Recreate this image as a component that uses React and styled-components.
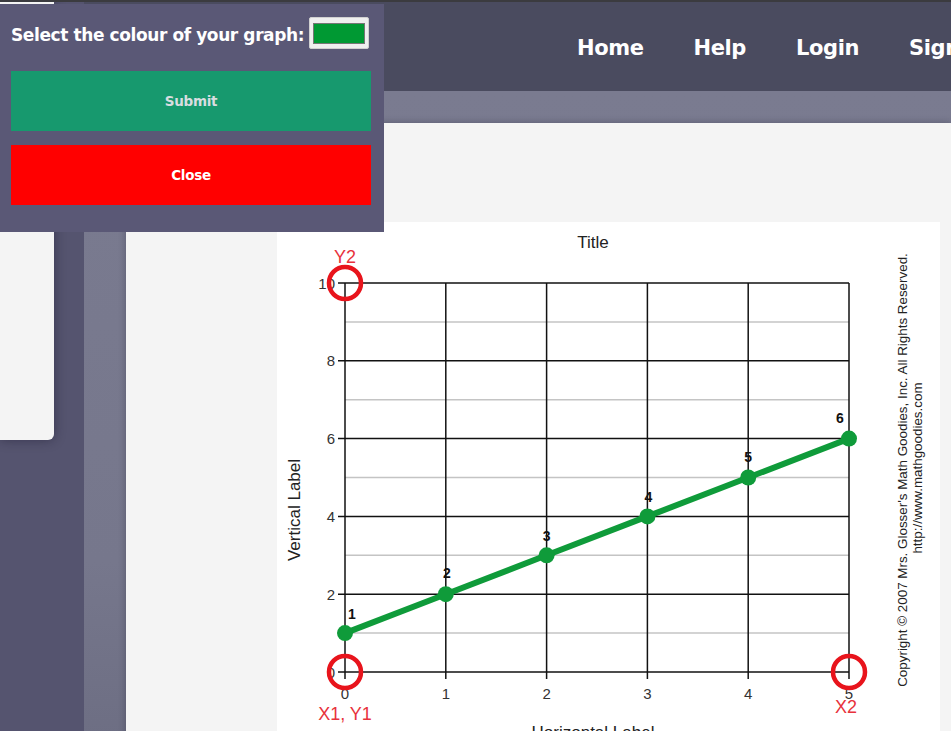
import React from 'react';
import styled, { createGlobalStyle } from 'styled-components';

const GlobalStyle = createGlobalStyle`
  html, body {
    margin: 0;
    padding: 0;
    overflow: hidden;
  }
  body {
    font-family: "DejaVu Sans", "Liberation Sans", sans-serif;
  }
`;

const Page = styled.div`
  position: relative;
  height: 100vh;
  display: grid;
  grid-template-columns: 84px 1fr;
  border-top: 2px solid #3b3b3f;
  box-sizing: border-box;
  overflow: hidden;
`;

const Sidebar = styled.aside`
  background: #55546f;
`;

const SideCard = styled.div`
  width: 54px;
  height: 438px;
  background: #f4f4f4;
  border-bottom-right-radius: 6px;
  box-shadow: 0 0 12px rgba(20, 18, 40, 0.45);
`;

const Main = styled.div`
  display: flex;
  flex-direction: column;
  min-width: 0;
`;

const Header = styled.header`
  height: 89px;
  flex-shrink: 0;
  background: #4a4b5f;
  display: flex;
  align-items: center;
  padding-left: 493px;
  gap: 50px;
  overflow: hidden;
  white-space: nowrap;
`;

const NavLink = styled.a`
  color: #ffffff;
  font-weight: 700;
  font-size: 21px;
  letter-spacing: -0.4px;
  text-decoration: none;
  padding-top: 2px;
`;

const Frame = styled.div`
  flex: 1;
  display: flex;
  padding: 32px 0 0 42px;
  background: linear-gradient(180deg, #7a7b90 0%, #76778c 70%, #6c6d82 100%);
  min-height: 0;
`;

const Content = styled.main`
  flex: 1;
  background: #f4f4f4;
  box-shadow: 0 0 7px rgba(30, 30, 50, 0.35);
  padding: 99px 11px 0 151px;
  overflow: hidden;
`;

const GraphCard = styled.div`
  width: 663px;
  height: 540px;
  background: #ffffff;
`;

const Popup = styled.div`
  position: absolute;
  top: 2px;
  left: 0;
  width: 384px;
  height: 228px;
  box-sizing: border-box;
  background: #5a5876;
  padding: 13px 13px 25px 11px;
  display: flex;
  flex-direction: column;
  gap: 14px;
`;

const PickerRow = styled.div`
  display: flex;
  align-items: center;
  gap: 5px;
  height: 32px;
  margin-bottom: 8px;
`;

const PickerLabel = styled.span`
  color: #ffffff;
  font-weight: 700;
  font-size: 17px;
  letter-spacing: -0.4px;
  white-space: nowrap;
  padding-top: 4px;
`;

const Swatch = styled.div`
  width: 60px;
  height: 32px;
  box-sizing: border-box;
  background: #efefef;
  border: 1px solid #d0d0d0;
  border-radius: 2px;
  padding: 5px 3px 4px;
  display: flex;
`;

const SwatchColour = styled.div`
  flex: 1;
  background: ${p => p.colour};
  border: 1px solid #767676;
`;

const ActionButton = styled.button`
  width: 360px;
  height: 60px;
  border: none;
  background: ${p => p.bg};
  color: ${p => p.fg};
  font-family: "DejaVu Sans", "Liberation Sans", sans-serif;
  font-weight: 700;
  font-size: 13.5px;
  letter-spacing: -0.3px;
  cursor: pointer;
`;

// chart geometry, in px from the card's top left
const X0 = 68;
const XU = 100.8;
const Y0 = 450;
const YU = 38.9;
const px = v => X0 + v * XU;
const py = v => Y0 - v * YU;

const points = [1, 2, 3, 4, 5, 6].map((y, i) => ({ x: i, y }));
const labelOffsets = [[7, -14], [1, -16], [0, -14], [1, -14], [0, -16], [-9, -16]];

const Graph = ({ colour }) => (
  <svg width="663" height="540" viewBox="0 0 663 540" fontFamily='"Liberation Sans", Arial, sans-serif'>
    <text x="316" y="26" fontSize="17" textAnchor="middle" fill="#222">Title</text>

    {[1, 3, 5, 7, 9].map(v => (
      <line key={'m' + v} x1={px(0)} x2={px(5)} y1={py(v)} y2={py(v)} stroke="#c4c4c4" strokeWidth="1.5" />
    ))}
    {[0, 2, 4, 6, 8, 10].map(v => (
      <g key={'h' + v}>
        <line x1={px(0) - 7} x2={px(5)} y1={py(v)} y2={py(v)} stroke="#111" strokeWidth="1.5" />
        <text x={px(0) - 10} y={py(v) + 5.5} fontSize="15" textAnchor="end" fill="#333">{v}</text>
      </g>
    ))}
    {[0, 1, 2, 3, 4, 5].map(v => (
      <g key={'v' + v}>
        <line x1={px(v)} x2={px(v)} y1={py(10)} y2={py(0) + 7} stroke="#111" strokeWidth="1.5" />
        <text x={px(v)} y="477" fontSize="15" textAnchor="middle" fill="#333">{v}</text>
      </g>
    ))}

    <text x="316" y="516" fontSize="17" textAnchor="middle" fill="#222">Horizontal Label</text>
    <text transform="translate(23 288) rotate(-90)" fontSize="17" textAnchor="middle" fill="#222">Vertical Label</text>
    <text transform="translate(630 248) rotate(-90)" fontSize="13.4" textAnchor="middle" fill="#222">
      Copyright © 2007 Mrs. Glosser's Math Goodies, Inc. All Rights Reserved.
    </text>
    <text transform="translate(645 246) rotate(-90)" fontSize="13.4" textAnchor="middle" fill="#222">
      http://www.mathgoodies.com
    </text>

    <polyline
      points={points.map(p => `${px(p.x)},${py(p.y)}`).join(' ')}
      fill="none"
      stroke={colour}
      strokeWidth="6"
      strokeLinejoin="round"
    />
    {points.map((p, i) => (
      <g key={'p' + i}>
        <circle cx={px(p.x)} cy={py(p.y)} r="8" fill={colour} />
        <text
          x={px(p.x) + labelOffsets[i][0]}
          y={py(p.y) + labelOffsets[i][1]}
          fontSize="14"
          fontWeight="700"
          textAnchor="middle"
          fill="#111"
        >
          {p.y}
        </text>
      </g>
    ))}

    <circle cx={px(0)} cy={py(10)} r="16" fill="none" stroke="#e8141c" strokeWidth="4.5" />
    <circle cx={px(0)} cy={py(0)} r="16" fill="none" stroke="#e8141c" strokeWidth="4.5" />
    <circle cx={px(5)} cy={py(0)} r="16" fill="none" stroke="#e8141c" strokeWidth="4.5" />
    <text x={px(0)} y="40.5" fontSize="18" textAnchor="middle" fill="#e8323c">Y2</text>
    <text x={px(0)} y="497.5" fontSize="18" textAnchor="middle" fill="#e8323c">X1, Y1</text>
    <text x={px(5) - 3} y="490.5" fontSize="18" textAnchor="middle" fill="#e8323c">X2</text>
  </svg>
);

const App = () => {
  const graphColour = '#0f9b3a';
  return (
    <>
      <GlobalStyle />
      <Page>
        <Sidebar>
          <SideCard />
        </Sidebar>
        <Main>
          <Header>
            <NavLink href="#">Home</NavLink>
            <NavLink href="#">Help</NavLink>
            <NavLink href="#">Login</NavLink>
            <NavLink href="#">Sign up</NavLink>
          </Header>
          <Frame>
            <Content>
              <GraphCard>
                <Graph colour={graphColour} />
              </GraphCard>
            </Content>
          </Frame>
        </Main>

        <Popup>
          <PickerRow>
            <PickerLabel>Select the colour of your graph:</PickerLabel>
            <Swatch>
              <SwatchColour colour="#009933" />
            </Swatch>
          </PickerRow>
          <ActionButton bg="#17996e" fg="#d9dde0">Submit</ActionButton>
          <ActionButton bg="#ff0000" fg="#ffffff">Close</ActionButton>
        </Popup>
      </Page>
    </>
  );
};

export default App;
